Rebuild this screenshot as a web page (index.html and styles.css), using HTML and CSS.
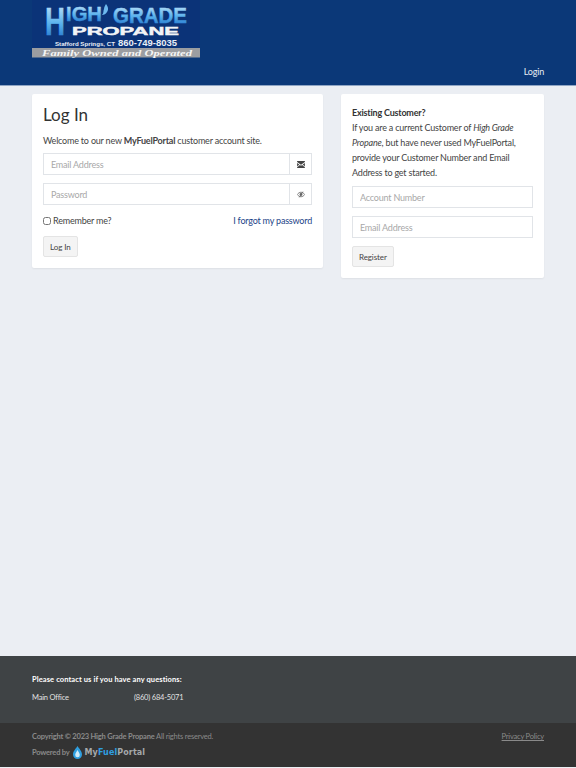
FILE: index.html
```html
<!DOCTYPE html>
<html lang="en">
<head>
  <meta charset="UTF-8">
  <meta name="viewport" content="width=device-width, initial-scale=1.0">
  <title>Log In</title>
  <link rel="stylesheet" href="styles.css">
</head>
<body>
  <!-- Header -->
  <header class="header">
    <svg class="logo" width="168" height="58" viewBox="0 0 168 58">
      <defs>
        <linearGradient id="logoBlue" x1="0" y1="0" x2="0" y2="1">
          <stop offset="0" stop-color="#cdeafa"/>
          <stop offset="0.55" stop-color="#57b0ec"/>
          <stop offset="1" stop-color="#1667c4"/>
        </linearGradient>
      </defs>
      <rect width="168" height="48" fill="#0b3378"/>
      <text x="13" y="35" class="logo-h" fill="url(#logoBlue)" stroke="url(#logoBlue)" textLength="20" lengthAdjust="spacingAndGlyphs">H</text>
      <text x="34" y="21" class="logo-big" fill="url(#logoBlue)" stroke="url(#logoBlue)" textLength="36" lengthAdjust="spacingAndGlyphs">IGH</text>
      <path d="M74 4c2 3 3 5 1 8-1 2-3 3-5 3 2-2 1-4 2-6 0-2 1-3 2-5z" fill="#6db9ee"/>
      <text x="81" y="23" class="logo-grade" fill="url(#logoBlue)" stroke="url(#logoBlue)" textLength="74" lengthAdjust="spacingAndGlyphs">GRADE</text>
      <text x="40" y="35" class="logo-mid" fill="#f2f4f6" stroke="#f2f4f6" textLength="107" lengthAdjust="spacingAndGlyphs">PROPANE</text>
      <text x="23" y="46" class="logo-small" fill="#e8eef6" textLength="60" lengthAdjust="spacingAndGlyphs">Stafford Springs, CT</text>
      <text x="86" y="46" class="logo-phone" fill="#e8eef6" textLength="59" lengthAdjust="spacingAndGlyphs">860-749-8035</text>
      <rect y="48" width="168" height="9.500" fill="#9b9da1"/>
      <text x="10" y="55.500" class="logo-tag" fill="#f4f4f4" textLength="150" lengthAdjust="spacingAndGlyphs">Family Owned and Operated</text>
    </svg>
    <nav class="nav"><a href="#">Login</a></nav>
  </header>

  <!-- Main content -->
  <main class="content">
    <section class="card">
      <h1>Log In</h1>
      <p class="welcome">Welcome to our new <strong>MyFuelPortal</strong> customer account site.</p>

      <div class="input-group">
        <input type="text" placeholder="Email Address">
        <span class="addon">
          <svg width="8" height="7" viewBox="0 0 10 9"><path d="M0 0h10v1.400L5 4.800 0 1.400zM0 2.600l2.800 1.900L0 7zM10 2.600 7.200 4.500 10 7zM3.600 5 5 6l1.400-1L10 8v1H0V8z" fill="#444"/></svg>
        </span>
      </div>
      <div class="input-group">
        <input type="password" placeholder="Password">
        <span class="addon">
          <svg width="8" height="7" viewBox="0 0 10 9"><path d="M.3 4.500C1.500 2.600 3.200 1.600 5 1.600s3.500 1 4.700 2.900C8.500 6.400 6.800 7.400 5 7.400S1.500 6.400.3 4.500z" fill="none" stroke="#666" stroke-width="1"/><circle cx="5" cy="4.500" r="1.800" fill="#666"/><path d="M7.500.8 2.800 8.200" stroke="#666" stroke-width="1"/></svg>
        </span>
      </div>

      <div class="remember-row">
        <label class="remember"><input type="checkbox"> Remember me?</label>
        <a href="#" class="forgot">I forgot my password</a>
      </div>
      <button class="button">Log In</button>
    </section>

    <section class="card">
      <h2>Existing Customer?</h2>
      <p class="intro">If you are a current Customer of <em>High Grade<br>Propane</em>, but have never used MyFuelPortal,<br>provide your Customer Number and Email<br>Address to get started.</p>
      <input class="field" type="text" placeholder="Account Number">
      <input class="field" type="text" placeholder="Email Address">
      <button class="button">Register</button>
    </section>
  </main>

  <!-- Footer -->
  <footer>
    <div class="footer-top">
      <p class="contact-title">Please contact us if you have any questions:</p>
      <div class="contact-row">
        <span class="contact-name">Main Office</span>
        <span>(860) 684-5071</span>
      </div>
    </div>
    <div class="footer-bottom">
      <div class="copyright-row">
        <span><strong>Copyright © 2023 High Grade Propane</strong> All rights reserved.</span>
        <a href="#">Privacy Policy</a>
      </div>
      <div class="powered">
        <strong>Powered by</strong>
        <svg width="9" height="13" viewBox="0 0 9 13"><path d="M4.500 0C6 2.500 9 5 9 8.500A4.500 4.500 0 0 1 0 8.500C0 5 3 2.500 4.500 0z" fill="#2f9fe0"/><path d="M4.500 4C5.300 6 6.800 7 6.800 9A2.300 2.300 0 0 1 2.200 9C2.200 7 3.700 6 4.500 4z" fill="#cfeaf8"/></svg>
        <span class="brand">My<span class="brand-blue">Fuel</span>Portal</span>
      </div>
    </div>
  </footer>
</body>
</html>
```

FILE: styles.css
```css
/* Global Styles */
* {
  box-sizing: border-box;
}

body {
  font-family: Lato, Arial, sans-serif;
  font-size: 9px;
  letter-spacing: -0.2px;
  color: #444;
  background: #ebeef3;
  margin: 0;
  height: 767px;
  display: flex;
  flex-direction: column;
}

/* Header */
.header {
  height: 86px;
  background: #0b3878;
  border-bottom: 1px solid #8fa5c4;
  padding: 0 32px;
  display: flex;
  justify-content: space-between;
}

.logo {
  display: block;
  letter-spacing: 0;
}

.logo text {
  font-family: "Liberation Sans", Arial, sans-serif;
  font-weight: bold;
  stroke-width: 0.4px;
}

.logo .logo-h {
  font-size: 38px;
}

.logo .logo-big {
  font-size: 20px;
}

.logo .logo-grade {
  font-size: 22px;
}

.logo .logo-mid {
  font-size: 10px;
}

.logo .logo-small {
  font-size: 6px;
}

.logo .logo-phone {
  font-size: 9px;
}

.logo .logo-tag {
  font-family: "Liberation Serif", serif;
  font-style: italic;
  font-size: 8px;
}

.nav {
  align-self: flex-end;
  padding-bottom: 8px;
}

.nav a {
  color: #e8edf4;
  text-decoration: none;
}

/* Main */
.content {
  flex: 1;
  padding: 8px 32px;
  display: grid;
  grid-template-columns: 291px 203px;
  justify-content: space-between;
  align-items: start;
}

.card {
  background: #fff;
  border-radius: 2px;
  box-shadow: 0 1px 2px rgba(0, 0, 0, 0.06);
  padding: 11px;
}

h1 {
  font-weight: 400;
  font-size: 17px;
  letter-spacing: 0;
  line-height: 20px;
  color: #333;
  margin: 0;
}

h2 {
  font-size: 9px;
  font-weight: 700;
  color: #333;
  line-height: 15px;
  margin: 0;
}

.welcome {
  line-height: 15px;
  margin: 8px 0 5px;
}

.intro {
  line-height: 15px;
  margin: 0 0 6px;
}

/* Form fields */
.input-group {
  display: flex;
  height: 22px;
  border: 1px solid #e1e4e8;
  margin-bottom: 8px;
}

input[type="text"],
input[type="password"] {
  flex: 1;
  min-width: 0;
  border: 0;
  padding: 0 7px;
  font-family: inherit;
  font-size: 9px;
  letter-spacing: -0.2px;
  color: #444;
  background: #fff;
}

input::placeholder {
  color: #a8a8a8;
  opacity: 1;
}

.addon {
  width: 22px;
  border-left: 1px solid #e1e4e8;
  display: flex;
  align-items: center;
  justify-content: center;
}

input.field {
  display: block;
  width: 100%;
  height: 22px;
  border: 1px solid #e1e4e8;
  margin-bottom: 8px;
}

.remember-row {
  display: flex;
  justify-content: space-between;
  align-items: center;
  height: 15px;
  margin: 0 0 8px;
}

.remember {
  display: flex;
  align-items: center;
  gap: 2px;
}

.remember input {
  margin: 0;
  width: 8px;
  height: 8px;
}

.forgot {
  color: #1c4488;
  text-decoration: none;
}

.button {
  display: block;
  height: 21px;
  padding: 0 6px;
  background: #f4f4f4;
  border: 1px solid #e4e4e4;
  border-radius: 2px;
  font-family: inherit;
  font-size: 8px;
  letter-spacing: -0.1px;
  color: #444;
}

/* Footer */
.footer-top {
  height: 67px;
  background: #3f4345;
  padding: 19px 32px 0;
  color: #e2e2e2;
  font-size: 7.500px;
}

.contact-title {
  margin: 0 0 9px;
  color: #fff;
  font-weight: 700;
  letter-spacing: 0.1px;
}

.contact-row {
  display: flex;
}

.contact-name {
  width: 102px;
}

.footer-bottom {
  height: 44px;
  background: #333;
  padding: 9px 32px 0;
  color: #8a8a8a;
  font-size: 7.500px;
}

.copyright-row {
  display: flex;
  justify-content: space-between;
  margin-bottom: 5px;
}

.copyright-row a {
  color: #8a8a8a;
}

.powered {
  display: flex;
  align-items: center;
  gap: 3px;
}

.brand {
  font-family: "DejaVu Sans", sans-serif;
  font-weight: 700;
  font-size: 8px;
  letter-spacing: 0.1px;
  color: #a5a8aa;
}

.brand-blue {
  color: #2f9fe0;
}
```
